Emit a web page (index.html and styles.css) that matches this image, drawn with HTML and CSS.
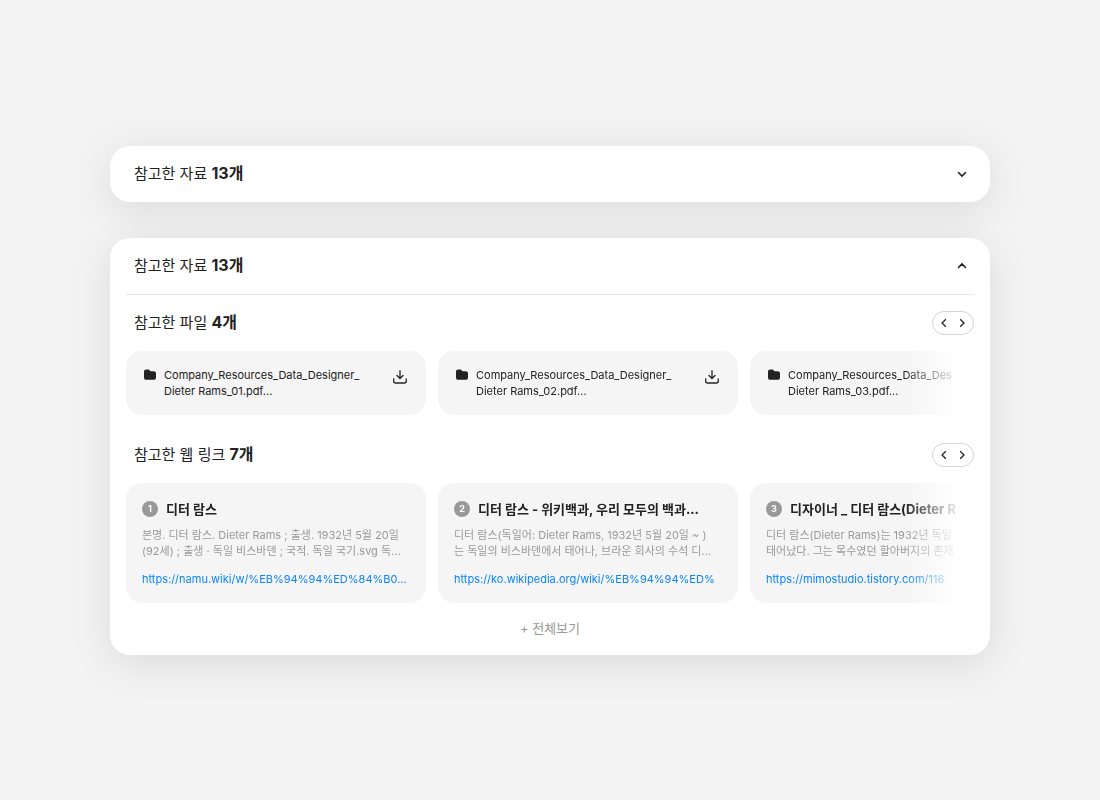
FILE: index.html
```html
<!DOCTYPE html>
<html lang="ko">
<head>
<meta charset="utf-8">
<meta name="viewport" content="width=device-width, initial-scale=1">
<title>참고한 자료</title>
<link rel="stylesheet" href="styles.css">
</head>
<body>
<svg class="sprite" aria-hidden="true">
  <symbol id="i-folder" viewBox="0 0 12 12"><path d="M0 3C0 1.400.8.600 2.400.600h1.800c.8 0 1.300.2 1.700.8l.6.8h3c1.700 0 2.500.8 2.500 2.400v3.800c0 1.600-.8 2.400-2.400 2.400H2.400C.8 10.800 0 10 0 8.400z" fill="currentColor"/></symbol>
  <symbol id="i-download" viewBox="0 0 16 16"><path d="M8 1.700v7.300M5 6.500l3 3 3-3M1.700 9.800v2.200c0 1.200.8 2 2 2h8.600c1.200 0 2-.8 2-2V9.800" fill="none" stroke="currentColor" stroke-width="1.300" stroke-linecap="round" stroke-linejoin="round"/></symbol>
  <symbol id="i-down" viewBox="0 0 12 12"><path d="M2.500 4.500L6 8l3.500-3.500" fill="none" stroke="currentColor" stroke-width="1.600" stroke-linecap="round"/></symbol>
  <symbol id="i-up" viewBox="0 0 12 12"><path d="M2.500 7.500L6 4l3.500 3.500" fill="none" stroke="currentColor" stroke-width="1.600" stroke-linecap="round"/></symbol>
  <symbol id="i-left" viewBox="0 0 12 12"><path d="M7.800 2.200L4 6l3.800 3.800" fill="none" stroke="currentColor" stroke-width="1.300"/></symbol>
  <symbol id="i-right" viewBox="0 0 12 12"><path d="M4.200 2.200L8 6 4.200 9.800" fill="none" stroke="currentColor" stroke-width="1.300"/></symbol>
</svg>
<main class="page">
  <section class="panel">
    <button class="toggle" type="button" aria-expanded="false">
      <span>참고한 자료 <b>13개</b></span>
      <svg class="icon"><use href="#i-down"/></svg>
    </button>
  </section>

  <section class="panel">
    <button class="toggle toggle-open" type="button" aria-expanded="true">
      <span>참고한 자료 <b>13개</b></span>
      <svg class="icon"><use href="#i-up"/></svg>
    </button>

    <div class="group">
      <header class="group-head">
        <h2 class="group-title">참고한 파일 <b>4개</b></h2>
        <div class="pager">
          <button class="pager-btn" type="button" aria-label="이전 파일"><svg class="icon"><use href="#i-left"/></svg></button>
          <button class="pager-btn" type="button" aria-label="다음 파일"><svg class="icon"><use href="#i-right"/></svg></button>
        </div>
      </header>
      <div class="track">
        <article class="card file">
          <svg class="icon folder"><use href="#i-folder"/></svg>
          <p class="file-name">Company_Resources_Data_Designer_<br>Dieter Rams_01.pdf...</p>
          <button class="download" type="button" aria-label="다운로드"><svg class="icon-lg"><use href="#i-download"/></svg></button>
        </article>
        <article class="card file">
          <svg class="icon folder"><use href="#i-folder"/></svg>
          <p class="file-name">Company_Resources_Data_Designer_<br>Dieter Rams_02.pdf...</p>
          <button class="download" type="button" aria-label="다운로드"><svg class="icon-lg"><use href="#i-download"/></svg></button>
        </article>
        <article class="card file">
          <svg class="icon folder"><use href="#i-folder"/></svg>
          <p class="file-name">Company_Resources_Data_Des<br>Dieter Rams_03.pdf...</p>
        </article>
      </div>
    </div>

    <div class="group">
      <header class="group-head">
        <h2 class="group-title">참고한 웹 링크 <b>7개</b></h2>
        <div class="pager">
          <button class="pager-btn" type="button" aria-label="이전 링크"><svg class="icon"><use href="#i-left"/></svg></button>
          <button class="pager-btn" type="button" aria-label="다음 링크"><svg class="icon"><use href="#i-right"/></svg></button>
        </div>
      </header>
      <div class="track">
        <article class="card link">
          <h3 class="link-title"><span class="num">1</span>디터 람스</h3>
          <p class="desc">본명. 디터 람스. Dieter Rams ; 출생. 1932년 5월 20일<br>(92세) ; 출생 · 독일 비스바덴 ; 국적. 독일 국기.svg 독...</p>
          <a class="url" href="#">https://namu.wiki/w/%EB%94%94%ED%84%B0...</a>
        </article>
        <article class="card link">
          <h3 class="link-title"><span class="num">2</span>디터 람스 - 위키백과, 우리 모두의 백과...</h3>
          <p class="desc">디터 람스(독일어: Dieter Rams, 1932년 5월 20일 ~ )<br>는 독일의 비스바덴에서 태어나, 브라운 회사의 수석 디...</p>
          <a class="url" href="#">https://ko.wikipedia.org/wiki/%EB%94%94%ED%</a>
        </article>
        <article class="card link">
          <h3 class="link-title"><span class="num">3</span>디자이너 _ 디터 람스(Dieter R</h3>
          <p class="desc">디터 람스(Dieter Rams)는 1932년 독일<br>태어났다. 그는 목수였던 할아버지의 존재</p>
          <a class="url" href="#">https://mimostudio.tistory.com/116</a>
        </article>
      </div>
    </div>

    <button class="more" type="button">+ 전체보기</button>
  </section>
</main>
</body>
</html>
```
FILE: styles.css
```css
* { box-sizing: border-box; margin: 0; }
body {
  background: #f3f3f3;
  color: #222;
  font-family: Inter, "Noto Sans CJK KR", sans-serif;
  font-size: 11px;
  line-height: 16px;
}
button {
  border: 0;
  padding: 0;
  background: none;
  color: inherit;
  font: inherit;
  cursor: pointer;
}
b { font-size: 16px; font-weight: 700; }
.sprite { position: absolute; width: 0; height: 0; }
.icon { display: block; flex: none; width: 12px; height: 12px; }
.icon-lg { display: block; width: 16px; height: 16px; }

.page {
  min-height: 100vh;
  max-width: 912px;
  margin: 0 auto;
  padding: 16px;
  display: flex;
  flex-direction: column;
  justify-content: center;
  gap: 36px;
}
.panel {
  padding: 0 16px;
  border-radius: 20px;
  background: #fff;
  box-shadow: 0 8px 40px rgba(0, 0, 0, 0.1);
}
.toggle {
  display: flex;
  align-items: center;
  justify-content: space-between;
  width: 100%;
  height: 56px;
  padding: 0 6px 0 8px;
  font-size: 15px;
  line-height: 24px;
}
.toggle-open {
  height: 57px;
  border-bottom: 1px solid #e8e8e8;
}

.group { padding: 16px 0 12px; }
.group-head {
  display: flex;
  align-items: center;
  justify-content: space-between;
  height: 24px;
  padding-left: 8px;
  margin-bottom: 16px;
}
.group-title { font-size: 15px; font-weight: 400; line-height: 24px; }
.pager {
  display: flex;
  width: 42px;
  height: 24px;
  border: 1px solid #d4d4d4;
  border-radius: 12px;
}
.pager-btn { flex: 1; display: flex; align-items: center; justify-content: center; }
.pager-btn:first-child { padding-left: 2px; }
.pager-btn:last-child { padding-right: 2px; }

.track {
  display: flex;
  gap: 12px;
  margin-right: 18px;
  overflow: hidden;
  mask-image: linear-gradient(to right, #000 calc(100% - 52px), rgba(0, 0, 0, 0.1));
}
.card {
  flex: none;
  width: 300px;
  border-radius: 16px;
  background: #f5f5f5;
  white-space: nowrap;
}
.file {
  display: flex;
  align-items: flex-start;
  gap: 8px;
  padding: 16px 18px;
}
.folder { margin-top: 2px; }
.file-name { flex: 1; }
.download { margin-top: 2px; }

.link { padding: 16px; }
.link-title {
  display: flex;
  align-items: center;
  gap: 8px;
  margin-bottom: 8px;
  font-size: 13px;
  font-weight: 700;
  line-height: 20px;
}
.num {
  width: 16px;
  height: 16px;
  border-radius: 50%;
  background: #999;
  color: #fff;
  font-size: 9px;
  line-height: 16px;
  text-align: center;
}
.desc { margin-bottom: 12px; color: #999; }
.url { display: block; color: #0a84ff; text-decoration: none; }
.more {
  display: block;
  width: 100%;
  height: 26px;
  margin-bottom: 14px;
  color: #999;
  font-size: 13px;
  line-height: 20px;
}
```
